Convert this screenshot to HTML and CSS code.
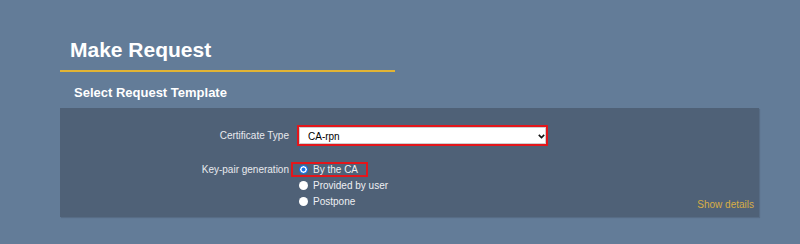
FILE: index.html
```html
<!DOCTYPE html>
<html>
<head>
<meta charset="utf-8">
<title>Make Request</title>
<link rel="stylesheet" href="styles.css">
</head>
<body>
<div class="page">
  <h1 class="title">Make Request</h1>
  <h2 class="subtitle">Select Request Template</h2>
  <div class="panel">
    <div class="form">
      <label class="label label-center" for="ctype">Certificate Type</label>
      <div class="value">
        <div class="select-wrap">
          <select id="ctype" class="select">
            <option>CA-rpn</option>
          </select>
          <svg class="chevron" width="7" height="5" viewBox="0 0 7 5" aria-hidden="true">
            <path d="M0.8 0.9 L3.5 3.6 L6.2 0.9" fill="none" stroke="#111" stroke-width="1.6"/>
          </svg>
        </div>
      </div>
      <div class="label label-top">Key-pair generation</div>
      <div class="value value-row">
        <div class="options">
          <label class="option option-marked"><input type="radio" name="kp" class="radio" checked><span>By the CA</span></label>
          <label class="option"><input type="radio" name="kp" class="radio"><span>Provided by user</span></label>
          <label class="option"><input type="radio" name="kp" class="radio"><span>Postpone</span></label>
        </div>
        <a class="details" href="#">Show details</a>
      </div>
    </div>
  </div>
</div>
</body>
</html>
```
FILE: styles.css
```css
html, body {
  margin: 0;
  padding: 0;
}
body {
  background: #637c98;
  font-family: "Liberation Sans", Arial, sans-serif;
  width: 800px;
  height: 244px;
  overflow: hidden;
}
.page {
  padding-left: 60px;
  width: 700px;
}
.title {
  margin: 38px 0 0 0;
  width: 335px;
  box-sizing: border-box;
  padding: 0 0 8px 10px;
  font-size: 21px;
  line-height: 24px;
  font-weight: bold;
  color: #ffffff;
  border-bottom: 2px solid #e2b434;
}
.subtitle {
  margin: 13px 0 0 0;
  padding-left: 14px;
  font-size: 13px;
  line-height: 15px;
  font-weight: bold;
  color: #ffffff;
}
.panel {
  margin-top: 8px;
  width: 699px;
  height: 109px;
  box-sizing: border-box;
  background: #4f6177;
  padding: 17px 5px 0 0;
  box-shadow: 1px 1px 1px rgba(0, 0, 0, 0.12);
}
.form {
  display: grid;
  grid-template-columns: 229px 1fr;
  column-gap: 2px;
  row-gap: 16px;
}
.label {
  text-align: right;
  font-size: 10px;
  color: #e8eaee;
  white-space: nowrap;
}
.label-center {
  align-self: center;
  line-height: 12px;
}
.label-top {
  align-self: start;
  padding-top: 2px;
  line-height: 11px;
}
.value {
  min-width: 0;
}
.select-wrap {
  position: relative;
  margin-left: 6px;
  width: 251px;
  height: 21px;
}
.select {
  appearance: none;
  -webkit-appearance: none;
  display: block;
  width: 251px;
  height: 21px;
  box-sizing: border-box;
  border: 2px solid #e3161b;
  border-radius: 0;
  background: #ffffff;
  box-shadow: inset 0 0 0 1px #cfcfcf;
  color: #000000;
  font-family: "Liberation Sans", Arial, sans-serif;
  font-size: 10px;
  padding: 1px 0 0 9px;
  margin: 0;
}
.chevron {
  position: absolute;
  right: 3px;
  top: 9px;
  pointer-events: none;
}
.value-row {
  display: flex;
  justify-content: space-between;
  align-items: flex-end;
}
.options {
  display: flex;
  flex-direction: column;
}
.option {
  display: flex;
  align-items: center;
  height: 16px;
  padding-left: 8px;
  font-size: 10px;
  color: #eef0f3;
  white-space: nowrap;
}
.option-marked {
  width: 77px;
  height: 15px;
  box-sizing: border-box;
  border: 2px solid #e3161b;
  padding-left: 6px;
  line-height: 11px;
}
.radio {
  appearance: none;
  -webkit-appearance: none;
  width: 9px;
  height: 9px;
  box-sizing: border-box;
  margin: 0 5px 0 0;
  border-radius: 50%;
  background: #ffffff;
  border: none;
  flex: none;
}
.radio:checked {
  background: #1a73e8;
  border: 1.5px solid #1a73e8;
  box-shadow: inset 0 0 0 1.5px #ffffff;
}
.details {
  font-size: 10px;
  line-height: 12px;
  color: #d8ad45;
  text-decoration: none;
  margin-bottom: -2px;
}
```
